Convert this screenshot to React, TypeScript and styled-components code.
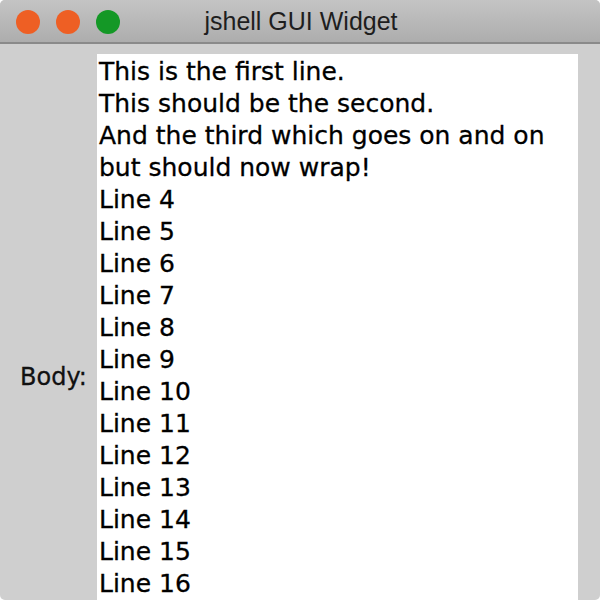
import React from "react";
import styled, { createGlobalStyle } from "styled-components";

const Global = createGlobalStyle`
  html, body { margin: 0; padding: 0; background: #ffffff; }
  body { width: 600px; height: 600px; overflow: hidden; }
`;

const Window = styled.div`
  width: 600px;
  height: 600px;
  border-radius: 5px;
  overflow: hidden;
  background: #cfcfcf;
  display: flex;
  flex-direction: column;
  font-family: "DejaVu Sans", "Verdana", sans-serif;
  color: #111;
`;

const TitleBar = styled.div`
  height: 42px;
  flex: none;
  position: relative;
  display: flex;
  align-items: center;
  justify-content: center;
  background: linear-gradient(#c4c4c4, #adadad);
  border-bottom: 2px solid #8a8a8a;
`;

const Lights = styled.div`
  position: absolute;
  left: 16px;
  top: 10px;
  display: flex;
  gap: 16px;
`;

const Light = styled.span<{ $c: string }>`
  width: 24px;
  height: 24px;
  border-radius: 50%;
  background: ${(p) => p.$c};
`;

const Title = styled.div`
  font-family: "Liberation Sans", Arial, sans-serif;
  font-size: 25px;
  color: #1e1e1e;
  padding-left: 2px;
`;

const Content = styled.div`
  flex: none;
  display: flex;
  align-items: center;
  padding: 10px 22px 0 20px;
  height: 646px;
  box-sizing: border-box;
`;

const Label = styled.div`
  width: 77px;
  font-size: 24px;
  padding-top: 10px;
  -webkit-text-stroke: 0.3px #111;
`;

const TextArea = styled.div`
  align-self: stretch;
  flex: 1;
  background: #ffffff;
  padding: 2px 0 0 2px;
  font-size: 25px;
  line-height: 32px;
  color: #000;
  -webkit-text-stroke: 0.3px #000;
  overflow: hidden;
`;

const Line = styled.div`
  white-space: nowrap;
`;

const lines = [
  "This is the first line.",
  "This should be the second.",
  "And the third which goes on and on",
  "but should now wrap!",
  ...Array.from({ length: 13 }, (_, i) => `Line ${i + 4}`),
];

export default function App() {
  return (
    <>
      <Global />
      <Window>
        <TitleBar>
          <Lights>
            <Light $c="#ee5f24" />
            <Light $c="#ee5f24" />
            <Light $c="#149826" />
          </Lights>
          <Title>jshell GUI Widget</Title>
        </TitleBar>
        <Content>
          <Label>Body:</Label>
          <TextArea>
            {lines.map((l) => (
              <Line key={l}>{l}</Line>
            ))}
          </TextArea>
        </Content>
      </Window>
    </>
  );
}
